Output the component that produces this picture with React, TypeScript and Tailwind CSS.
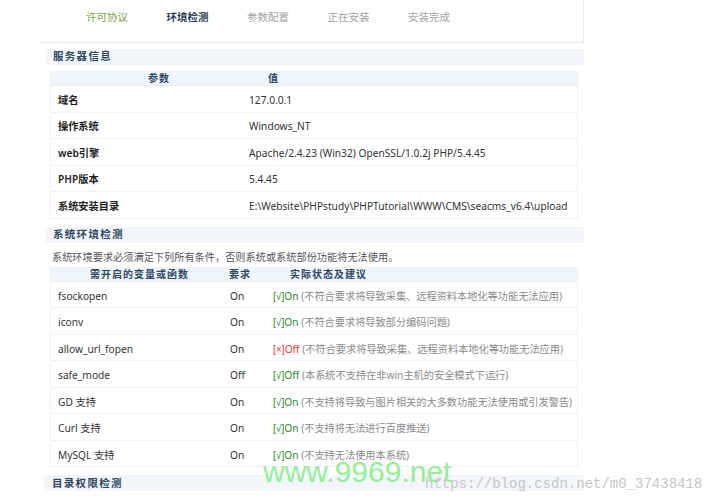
const serverRows = [
  ['域名', '127.0.0.1'],
  ['操作系统', 'Windows_NT'],
  ['web引擎', 'Apache/2.4.23 (Win32) OpenSSL/1.0.2j PHP/5.4.45'],
  ['PHP版本', '5.4.45'],
  ['系统安装目录', 'E:\\Website\\PHPstudy\\PHPTutorial\\WWW\\CMS\\seacms_v6.4\\upload'],
];

const envRows = [
  { name: 'fsockopen', req: 'On', ok: true, val: 'On', tip: '(不符合要求将导致采集、远程资料本地化等功能无法应用)' },
  { name: 'iconv', req: 'On', ok: true, val: 'On', tip: '(不符合要求将导致部分编码问题)' },
  { name: 'allow_url_fopen', req: 'On', ok: false, val: 'Off', tip: '(不符合要求将导致采集、远程资料本地化等功能无法应用)' },
  { name: 'safe_mode', req: 'Off', ok: true, val: 'Off', tip: '(本系统不支持在非win主机的安全模式下运行)' },
  { name: 'GD 支持', req: 'On', ok: true, val: 'On', tip: '(不支持将导致与图片相关的大多数功能无法使用或引发警告)' },
  { name: 'Curl 支持', req: 'On', ok: true, val: 'On', tip: '(不支持将无法进行百度推送)' },
  { name: 'MySQL 支持', req: 'On', ok: true, val: 'On', tip: '(不支持无法使用本系统)' },
];

const steps = [
  { label: '许可协议', cls: 'text-[#7ba23f]' },
  { label: '环境检测', cls: 'text-[#2c3f52] font-bold' },
  { label: '参数配置', cls: 'text-[#a3a3a3]' },
  { label: '正在安装', cls: 'text-[#a3a3a3]' },
  { label: '安装完成', cls: 'text-[#a3a3a3]' },
];

function SectionTitle({ title }: { title: string }) {
  return (
    <div className="ml-[6px] h-[16px] bg-[#f2f6fb] pl-[7px] flex items-center text-[10.5px] font-bold tracking-[1.3px] text-[#2d4763]">
      {title}
    </div>
  );
}

export default function App() {
  return (
    <div className="relative w-[712px] h-[500px] overflow-hidden bg-white font-['Noto_Sans','Noto_Sans_CJK_SC',sans-serif] text-[10.2px] text-[#333]">
      <div className="ml-[40px] w-[544px]">
        {/* steps */}
        <nav className="h-[43px] border-r border-b border-[#e4edf5] flex items-start pt-[9px] pl-[46px] text-[10.5px]">
          {steps.map(s => (
            <span key={s.label} className={`w-[80.5px] shrink-0 leading-[16px] ${s.cls}`}>{s.label}</span>
          ))}
        </nav>

        {/* server info */}
        <div className="mt-[6px]">
          <SectionTitle title="服务器信息" />
        </div>
        <div className="mt-[6px] ml-[10px] w-[528px] border-x border-[#edf1f5]">
          <div className="h-[15px] pt-[1px] bg-[#eef5fc] border-b border-[#e8f1d6] flex items-center text-[10px] font-bold tracking-[1px] text-[#2d4763]">
            <span className="pl-[97px] w-[217px] shrink-0">参数</span>
            <span>值</span>
          </div>
          {serverRows.map(([k, v]) => (
            <div key={k} className="h-[26.6px] pt-[3px] border-b border-[#eef2f6] flex items-center whitespace-nowrap">
              <span className="pl-[7px] w-[198px] shrink-0 font-semibold text-[#222]">{k}</span>
              <span className="text-[#333]">{v}</span>
            </div>
          ))}
        </div>

        {/* environment */}
        <div className="mt-[8px]">
          <SectionTitle title="系统环境检测" />
        </div>
        <p className="mt-[6px] pl-[12px] h-[16px] leading-[16px] text-[#555] whitespace-nowrap">
          系统环境要求必须满足下列所有条件，否则系统或系统部份功能将无法使用。
        </p>
        <div className="mt-[2px] ml-[10px] w-[528px] border-x border-[#edf1f5]">
          <div className="h-[15px] pt-[1px] bg-[#eef5fc] border-b border-[#e8f1d6] flex items-center text-[10px] font-bold tracking-[1px] text-[#2d4763] whitespace-nowrap">
            <span className="pl-[39px] w-[178px] shrink-0">需开启的变量或函数</span>
            <span className="w-[61px] shrink-0">要求</span>
            <span>实际状态及建议</span>
          </div>
          {envRows.map(r => (
            <div key={r.name} className="h-[26.5px] pt-[3px] border-b border-[#eef2f6] flex items-center whitespace-nowrap">
              <span className="pl-[7px] w-[179px] shrink-0 text-[#333]">{r.name}</span>
              <span className="w-[43px] shrink-0 text-[#333]">{r.req}</span>
              <span className="whitespace-nowrap">
                <span className={r.ok ? 'text-[#2b8c2b]' : 'text-[#f03a3a]'}>
                  <span className="font-['Liberation_Sans',sans-serif]">{r.ok ? '[√]' : '[×]'}</span>
                  {r.val}
                </span>{' '}
                <span className="text-[#8a8a8a]">{r.tip}</span>
              </span>
            </div>
          ))}
        </div>

        {/* directory */}
        <div className="mt-[8px] ml-[4px] h-[16px] bg-[#f2f6fb] pl-[8px] flex items-center text-[10.5px] font-bold tracking-[1.3px] text-[#2d4763]">
          目录权限检测
        </div>
      </div>

      {/* watermarks */}
      <span className="absolute left-[263px] top-[457px] leading-none text-[30px] font-['Liberation_Sans',sans-serif] text-[#86ee86]/90">
        www.9969.net
      </span>
      <span className="absolute left-[425px] top-[477px] leading-none text-[14px] font-['Liberation_Mono',monospace] text-[#c6c6c6]">
        https://blog.csdn.net/m0_37438418
      </span>
    </div>
  );
}
